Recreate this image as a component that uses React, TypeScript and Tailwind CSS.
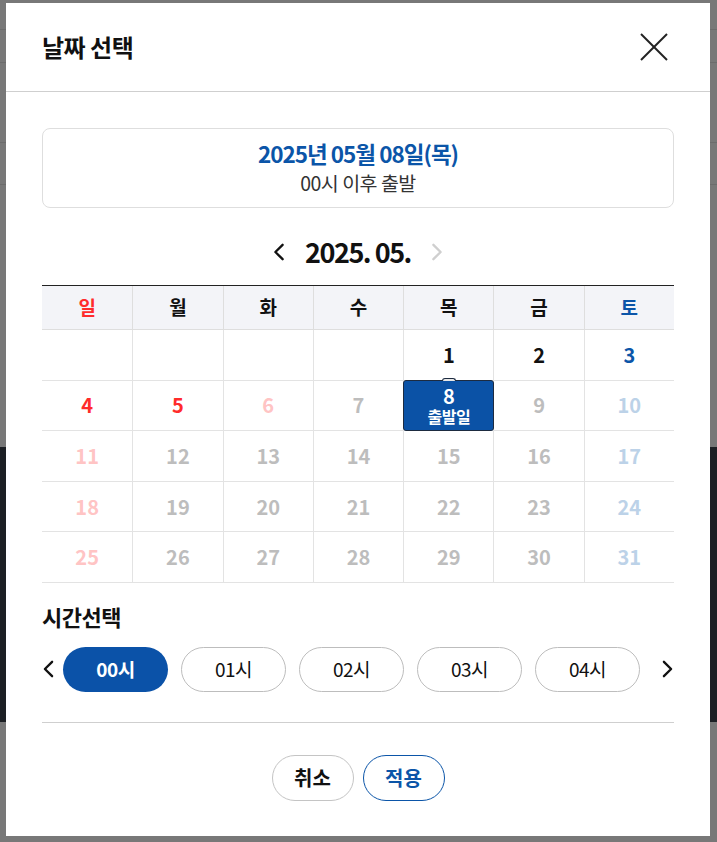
import React, { useState } from 'react';

const FONT = "font-['Noto_Sans_CJK_KR','Noto_Sans',sans-serif]";

type Day = { d: number; tone: string; label?: string };

const WEEKDAYS = [
  { t: '일', c: 'text-[#ff2b2b]' },
  { t: '월', c: 'text-[#111]' },
  { t: '화', c: 'text-[#111]' },
  { t: '수', c: 'text-[#111]' },
  { t: '목', c: 'text-[#111]' },
  { t: '금', c: 'text-[#111]' },
  { t: '토', c: 'text-[#0b55a8]' },
];

// tones
const RED = 'text-[#ff2b2b]';
const BLACK = 'text-[#111]';
const BLUE = 'text-[#0b55a8]';
const PINK = 'text-[#ffc4c4]';
const GRAY = 'text-[#bdbdbd]';
const SKY = 'text-[#bcd2e8]';

const weeks: (Day | null)[][] = [
  [null, null, null, null, { d: 1, tone: BLACK }, { d: 2, tone: BLACK }, { d: 3, tone: BLUE }],
  [
    { d: 4, tone: RED },
    { d: 5, tone: RED },
    { d: 6, tone: PINK },
    { d: 7, tone: GRAY },
    { d: 8, tone: 'selected', label: '출발일' },
    { d: 9, tone: GRAY },
    { d: 10, tone: SKY },
  ],
  [11, 12, 13, 14, 15, 16, 17].map((d, i) => ({ d, tone: i === 0 ? PINK : i === 6 ? SKY : GRAY })),
  [18, 19, 20, 21, 22, 23, 24].map((d, i) => ({ d, tone: i === 0 ? PINK : i === 6 ? SKY : GRAY })),
  [25, 26, 27, 28, 29, 30, 31].map((d, i) => ({ d, tone: i === 0 ? PINK : i === 6 ? SKY : GRAY })),
];

const hours = ['00시', '01시', '02시', '03시', '04시'];

const Chevron = ({ dir, className }: { dir: 'left' | 'right'; className?: string }) => (
  <svg viewBox="0 0 12 20" className={className} fill="none" stroke="currentColor" strokeWidth="2.6" strokeLinecap="round" strokeLinejoin="round">
    {dir === 'left' ? <polyline points="10,2 2,10 10,18" /> : <polyline points="2,2 10,10 2,18" />}
  </svg>
);

const App: React.FC = () => {
  const [hour, setHour] = useState('00시');

  return (
    <div className={`relative h-[842px] w-[717px] overflow-hidden bg-[#787878] ${FONT}`}>
      {/* dimmed page behind the modal */}
      <div className="flex h-full flex-col">
        <div className="h-[30px] border-b border-[#6c6c6c]" />
        <div className="h-[33px] border-b border-[#6c6c6c]" />
        <div className="h-[80px] border-b border-[#6c6c6c]" />
        <div className="h-[42px] border-b border-[#6c6c6c]" />
        <div className="h-[262px]" />
        <div className="h-[275px] bg-[#1c1f24]" />
        <div className="flex-1" />
      </div>

      {/* modal */}
      <div className="absolute left-[6px] top-[3px] flex h-[833px] w-[704px] flex-col bg-white">
        <div className="flex h-[89px] items-center justify-between border-b border-[#cfcfcf] pl-[36px] pr-[42px]">
          <h2 className="text-[24px] font-bold tracking-[-0.5px] text-[#111]">날짜 선택</h2>
          <button className="text-[#222]">
            <svg viewBox="0 0 28 28" className="h-[28px] w-[28px]" stroke="currentColor" strokeWidth="2" fill="none">
              <line x1="1" y1="1" x2="27" y2="27" />
              <line x1="27" y1="1" x2="1" y2="27" />
            </svg>
          </button>
        </div>

        <div className="flex flex-1 flex-col px-[36px]">
          <div className="mt-[36px] flex h-[80px] flex-col items-center justify-center rounded-[8px] border border-[#dedede]">
            <p className="text-[22.5px] font-bold leading-[30px] tracking-[-1px] text-[#0b55a8]">2025년 05월 08일(목)</p>
            <p className="text-[19.5px] leading-[30px] tracking-[-0.5px] text-[#333]">00시 이후 출발</p>
          </div>

          <div className="mt-[24px] flex h-[40px] items-center justify-center gap-[20px]">
            <Chevron dir="left" className="h-[18px] w-[12px] text-[#111]" />
            <span className="text-[27px] font-bold tracking-[-1.5px] text-[#111]">2025. 05.</span>
            <Chevron dir="right" className="h-[18px] w-[12px] text-[#cfcfcf]" />
          </div>

          <div className="mt-[13px] border-t border-[#222]">
            <div className="grid h-[44px] grid-cols-7 border-b border-[#dedede] bg-[#f3f4f8]">
              {WEEKDAYS.map((w, i) => (
                <div
                  key={w.t}
                  className={`flex items-center justify-center text-[19px] font-bold ${w.c} ${i > 0 ? 'border-l border-[#dedede]' : ''}`}
                >
                  {w.t}
                </div>
              ))}
            </div>
            {weeks.map((week, wi) => (
              <div key={wi} className="grid h-[50.6px] grid-cols-7 border-b border-[#e3e3e3]">
                {week.map((day, di) => (
                  <div
                    key={di}
                    className={`relative flex items-center justify-center ${di > 0 ? 'border-l border-[#e3e3e3]' : ''}`}
                  >
                    {day && day.tone === 'selected' ? (
                      <div className="absolute -left-[1px] -right-[1px] -top-[1px] -bottom-[1px] z-10 flex flex-col items-center justify-center gap-[3px] rounded-[3px] border border-[#1d2b40] bg-[#0b52a6] text-white">
                        <span className="absolute -top-[3px] left-1/2 h-[3px] w-[14px] -translate-x-1/2 rounded-t-[3px] border border-b-0 border-[#1d2b40] bg-[#e8e8e8]" />
                        <span className="text-[20px] font-bold leading-[19px]">{day.d}</span>
                        <span className="text-[16px] font-bold leading-[16px] tracking-[-0.5px]">{day.label}</span>
                      </div>
                    ) : day ? (
                      <span className={`text-[20px] font-bold ${day.tone}`}>{day.d}</span>
                    ) : null}
                  </div>
                ))}
              </div>
            ))}
          </div>

          <h3 className="mt-[19px] text-[22px] font-bold leading-[28px] tracking-[-0.5px] text-[#111]">시간선택</h3>

          <div className="mt-[17px] flex items-center">
            <Chevron dir="left" className="ml-[1px] h-[18px] w-[11px] text-[#111]" />
            <div className="ml-[9px] flex gap-[13px]">
              {hours.map((h) => (
                <button
                  key={h}
                  onClick={() => setHour(h)}
                  className={`h-[45px] w-[105px] rounded-full text-[19px] tracking-[-0.5px] ${
                    hour === h
                      ? 'bg-[#0b52a8] font-bold text-white'
                      : 'border border-[#bdbdbd] text-[#111]'
                  }`}
                >
                  {h}
                </button>
              ))}
            </div>
            <div className="flex-1" />
            <Chevron dir="right" className="mr-[1px] h-[18px] w-[11px] text-[#111]" />
          </div>

          <div className="mt-[30px] border-t border-[#cfcfcf]" />

          <div className="mt-[32px] flex justify-center gap-[9px]">
            <button className="h-[46px] w-[82px] rounded-full border border-[#c4c4c4] text-[20px] font-bold text-[#111]">
              취소
            </button>
            <button className="h-[46px] w-[82px] rounded-full border border-[#0b55a8] text-[20px] font-bold text-[#0b55a8]">
              적용
            </button>
          </div>
        </div>
      </div>
    </div>
  );
};

export default App;
